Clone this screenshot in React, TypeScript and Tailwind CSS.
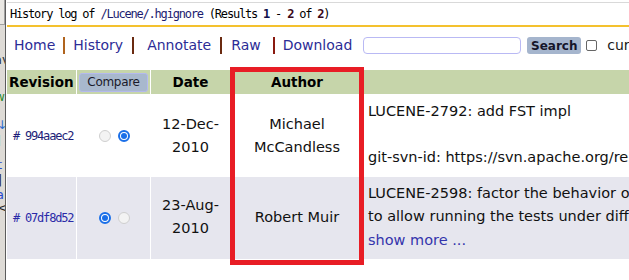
import React from 'react'

const mono = { fontFamily: '"DejaVu Sans Mono", monospace' }

const Radio: React.FC<{ checked?: boolean }> = ({ checked }) =>
  checked ? (
    <span className="w-[12px] h-[12px] rounded-full border-[2px] border-[#1a6fe8] bg-white flex items-center justify-center">
      <span className="w-[6px] h-[6px] rounded-full bg-[#1a6fe8]" />
    </span>
  ) : (
    <span className="w-[12px] h-[12px] rounded-full border border-[#cfcfcf] bg-[#f3f3f3]" />
  )

const App: React.FC = () => {
  return (
    <div className="relative w-[629px] h-[280px] overflow-hidden bg-white flex font-['DejaVu_Sans',sans-serif] text-[#111]">
      {/* piece of the window behind */}
      <div className="relative w-[6px] h-full shrink-0 bg-[#dedbd6] border-r border-[#5c5c5c] overflow-hidden">
        <div className="h-[25px] border-b border-r border-[#a0a0a0] bg-[#e9e7e3]" />
        <span className="absolute left-[-6px] top-[50px] text-[13px] text-[#333]">av</span>
        <span className="absolute left-[-5px] top-[88px] text-[12px] text-[#2a8a2a]">w</span>
        <span className="absolute left-[-3px] top-[116px] text-[12px] text-[#2a6ad0]">↓</span>
        <span className="absolute left-[-4px] top-[132px] text-[12px] text-[#2a7a2a]">]</span>
        <span className="absolute left-[-3px] top-[155px] text-[13px] text-[#2a4ad0]">t</span>
        <span className="absolute left-[-2px] top-[170px] text-[13px] text-[#222]">|</span>
        <span className="absolute left-[-4px] top-[185px] text-[13px] text-[#2a4ad0]">a</span>
        <span className="absolute left-[-3px] top-[198px] text-[13px] text-[#222]">&lt;</span>
      </div>

      <div className="flex-1 ml-px min-w-0">
        {/* title */}
        <div className="pt-[2px]">
          <div className="border-t border-[#d9d9d9] h-[23px] flex items-center pl-[3px] text-[12px] tracking-[-1.2px] whitespace-nowrap text-black" style={mono}>
            <span>History log of&nbsp;</span>
            <span className="text-[#1c1c70]">/Lucene/.hgignore</span>
            <span>&nbsp;(Results&nbsp;</span>
            <b className="text-[#10104a]">1</b>
            <span>&nbsp;-&nbsp;</span>
            <b className="text-[#3a0a1a]">2</b>
            <span>&nbsp;of&nbsp;</span>
            <b className="text-[#3a0a1a]">2</b>
            <span>)</span>
          </div>
          <div className="h-[2px] bg-[#f4c12e]" />
        </div>

        {/* nav */}
        <div className="h-[37px] flex items-center text-[14px] text-[#2c2c96] whitespace-nowrap">
          <span className="ml-[7px]">Home</span>
          <span className="ml-[8px] h-[17px] border-l-2 border-[#b0641e]" />
          <span className="ml-[8px]">History</span>
          <span className="ml-[9px] h-[17px] border-l-2 border-[#6a2a10]" />
          <span className="ml-[13px]">Annotate</span>
          <span className="ml-[9px] h-[17px] border-l-2 border-[#6a2a10]" />
          <span className="ml-[9px]">Raw</span>
          <span className="ml-[12px] h-[17px] border-l-2 border-[#8a1a10]" />
          <span className="ml-[8px]">Download</span>
          <span className="ml-[11px] w-[158px] h-[17px] shrink-0 border border-[#b9b9f4] rounded-[4px] bg-white" />
          <span className="ml-[6px] w-[54px] h-[17px] shrink-0 rounded-[3px] bg-[#a5b5cd] flex items-center justify-center text-[12px] font-bold text-[#15152a]">
            Search
          </span>
          <span className="ml-[5px] w-[11px] h-[11px] shrink-0 border border-[#666] rounded-[2px] bg-white" />
          <span className="ml-[10px] text-[#1a1a1a]">current directory</span>
        </div>

        {/* history table */}
        <div className="mt-[6px] grid grid-cols-[69px_73px_79px_132px_600px] gap-px text-[14.5px]">
          <div className="h-[24px] bg-[#c6d5aa] flex items-center pl-[2px] font-bold text-[13.5px] text-black">Revision</div>
          <div className="h-[24px] bg-[#c6d5aa] flex items-center px-[2px]">
            <span className="w-full h-[19px] rounded-[3px] bg-[#a8b8cd] border border-[#b4b9ee] flex items-center justify-center text-[12px] tracking-[-0.3px] text-[#1a1a2a]">
              Compare
            </span>
          </div>
          <div className="h-[24px] bg-[#c6d5aa] flex items-center justify-center font-bold text-[13.5px] text-black">Date</div>
          <div className="h-[24px] bg-[#c6d5aa] flex items-center justify-center font-bold text-[13.5px] text-black">Author</div>
          <div className="h-[24px] bg-[#c6d5aa]" />

          {/* row 1 */}
          <div className="h-[81px] flex items-center pl-[6px] text-[12px] tracking-[-1.2px] text-[#1e1e78] whitespace-nowrap" style={mono}>
            #&nbsp;994aaec2
          </div>
          <div className="h-[81px] flex items-center justify-center gap-[7px] pl-[2px]">
            <Radio />
            <Radio checked />
          </div>
          <div className="h-[81px] flex items-center justify-center text-center leading-[23px]">
            12-Dec-
            <br />
            2010
          </div>
          <div className="h-[81px] flex items-center justify-center text-center leading-[23px]">
            Michael
            <br />
            McCandless
          </div>
          <div className="h-[81px] pt-[5px] pl-[4px] leading-[23px] whitespace-nowrap">
            <div>LUCENE-2792: add FST impl</div>
            <div>&nbsp;</div>
            <div>git-svn-id: https://svn.apache.org/repos/asf/lucene/dev/trunk@1044834 13f79535-47bb-0310-9956-ffa450edef68</div>
          </div>

          {/* row 2 */}
          <div className="h-[82px] bg-[#e6e6ee] flex items-center pl-[6px] text-[12px] tracking-[-1.2px] text-[#2a2aa8] whitespace-nowrap" style={mono}>
            #&nbsp;07df8d52
          </div>
          <div className="h-[82px] bg-[#e6e6ee] flex items-center justify-center gap-[7px] pl-[2px]">
            <Radio checked />
            <Radio />
          </div>
          <div className="h-[82px] bg-[#e6e6ee] flex items-center justify-center text-center leading-[23px] pb-[3px]">
            23-Aug-
            <br />
            2010
          </div>
          <div className="h-[82px] bg-[#e6e6ee] flex items-center justify-center">Robert Muir</div>
          <div className="h-[82px] bg-[#e6e6ee] pt-[5px] pl-[4px] leading-[23px] whitespace-nowrap">
            <div>LUCENE-2598: factor the behavior of LuceneTestCase into a reusable setup</div>
            <div>to allow running the tests under different codecs</div>
            <div className="mt-[1px] text-[#3434ac]">show more ...</div>
          </div>
        </div>
      </div>

      {/* highlight box */}
      <div className="absolute left-[230px] top-[67px] w-[134px] h-[198px] border-[5px] border-[#e81d25] pointer-events-none" />
    </div>
  )
}

export default App
